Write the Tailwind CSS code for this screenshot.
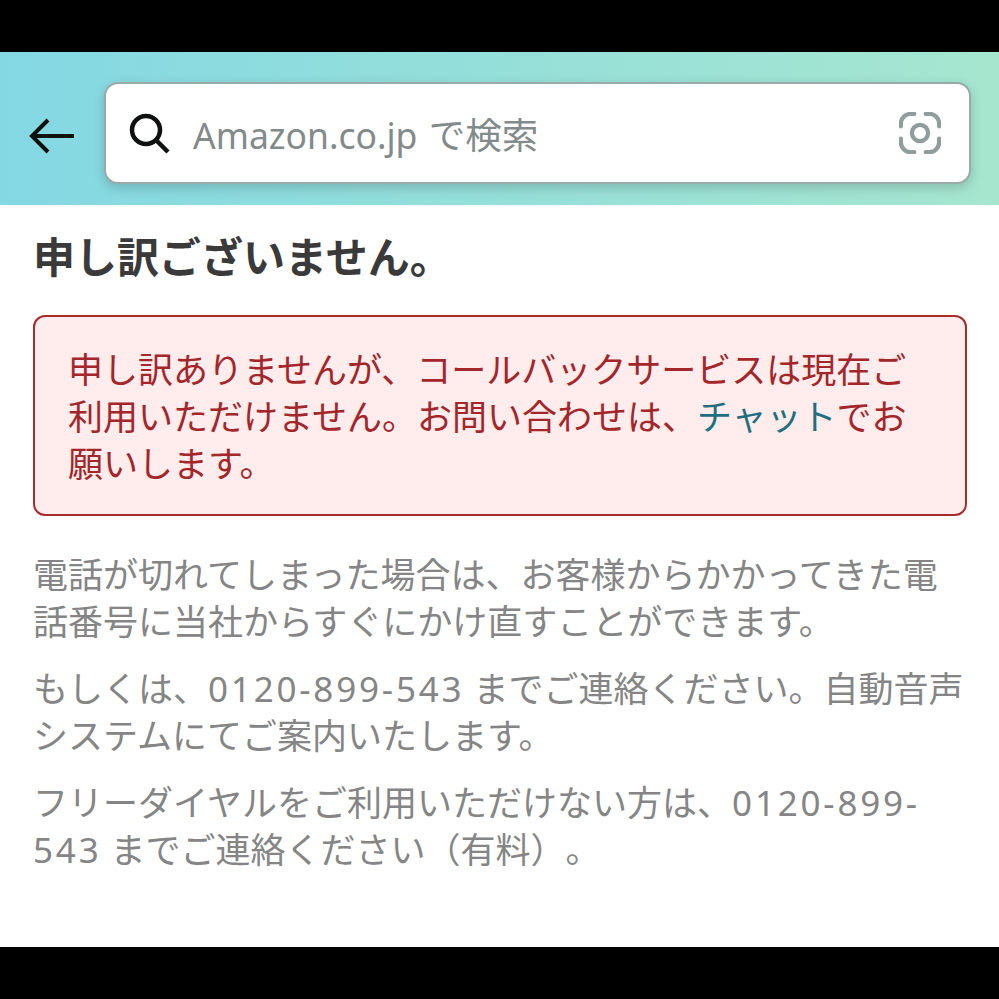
<!DOCTYPE html>
<html lang="ja">
<head>
    <meta charset="UTF-8">
    <title>Amazon</title>
    <script src="https://cdn.jsdelivr.net/npm/@tailwindcss/browser@4"></script>
</head>
<body class="bg-black h-[999px] overflow-hidden [text-spacing-trim:space-all] font-['Noto_Sans','Noto_Sans_CJK_JP',sans-serif]">
    <div class="pt-[52px] h-[947px]">
        <div class="bg-white h-[895px]">
            <!-- Search header -->
            <header class="h-[153px] pt-[8px] bg-gradient-to-r from-[#84d8e3] to-[#a6e6cf] flex items-center pl-[29px] pr-[28px]">
                <svg class="w-[45px] h-[38px] shrink-0 mt-[6px]" viewBox="0 0 45 38" fill="none" stroke="#0f1111" stroke-width="4">
                    <path d="M45 19H3M19 3L3 19l16 16"/>
                </svg>
                <div class="ml-[30px] flex-1 h-[102px] bg-white rounded-[14px] border-2 border-[#9aaaa8] shadow-[0_4px_12px_rgba(0,0,0,0.18)] flex items-center pl-[22px] pr-[28px]">
                    <svg class="w-[42px] h-[42px] shrink-0 mt-[2px]" viewBox="0 0 42 42" fill="none" stroke="#0f1111" stroke-width="4.5">
                        <circle cx="18" cy="17" r="14"/>
                        <path d="M28 27l12 12"/>
                    </svg>
                    <span class="ml-[23px] mt-[6px] text-[35.5px] text-[#828a8a]">Amazon.co.jp <span class="ml-[2px] text-[36.5px]">で検索</span></span>
                    <svg class="ml-auto w-[42px] h-[42px] shrink-0" viewBox="0 0 44 44" fill="none" stroke="#8f9e9c" stroke-width="4.5" stroke-linecap="round">
                        <path d="M2 15v-3a10 10 0 0 1 10-10h4M28 2h4a10 10 0 0 1 10 10v3M42 28v4a10 10 0 0 1-10 10h-4M16 42h-4a10 10 0 0 1-10-10v-4"/>
                        <circle cx="22" cy="22" r="8.5"/>
                    </svg>
                </div>
            </header>

            <main class="px-[33px]">
                <h1 class="pt-[27px] text-[42px] leading-[50px] font-bold text-[#3a3a3a]">申し訳ございません。</h1>

                <div class="mt-[33px] h-[201px] w-[934px] border-2 border-[#a82a2a] rounded-[12px] bg-[#ffecec] pt-[29px] pl-[33px] pr-[55px] text-[35px] leading-[47px] text-[#a3262a]">
                    申し訳ありませんが、コールバックサービスは現在ご利用いただけません。お問い合わせは、<span class="text-[#1f6f80]">チャット</span>でお願いします。
                </div>

                <div class="mt-[35px] space-y-[20px] text-[35px] leading-[47px] text-[#858585]">
                    <p>電話が切れてしまった場合は、お客様からかかってきた電話番号に当社からすぐにかけ直すことができます。</p>
                    <p>もしくは、<span class="tracking-[2.8px]">0120-899-543</span> までご連絡ください。自動音声システムにてご案内いたします。</p>
                    <p>フリーダイヤルをご利用いただけない方は、 <span class="ml-[-9px] tracking-[2.8px]">0120-899-</span><br><span class="tracking-[2.8px]">543</span> までご連絡ください（有料）。</p>
                </div>
            </main>
        </div>
    </div>
</body>
</html>
